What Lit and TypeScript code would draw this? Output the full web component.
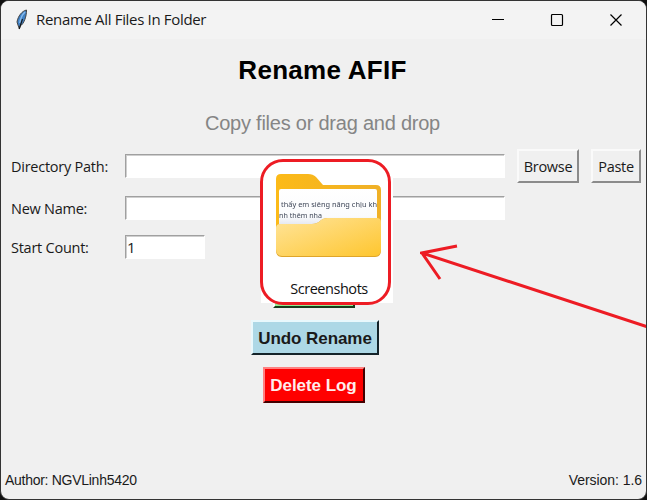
import { LitElement, html, css, svg } from "lit";
import { customElement, property } from "lit/decorators.js";

@customElement("folder-tile")
class FolderTile extends LitElement {
  @property() label = "";

  static styles = css`
    :host { display: block; position: relative; width: 132px; height: 144px; background: #fff; }
    .ring { position: absolute; left: -1px; top: 0; box-sizing: border-box; width: 131px; height: 146px; border: 3px solid #ed1c24; border-radius: 23px; }
    .art { display: block; margin: 0 auto 0 14px; padding-top: 15px; }
    .label { position: relative; width: 136px; margin-top: 21px; text-align: center; font: 14.5px/20px "Open Sans", "Noto Sans", sans-serif; letter-spacing: -0.45px; color: #111; }
    .note { font: 7.5px "Noto Sans", sans-serif; fill: #3f4758; filter: blur(0.5px); }
  `;

  render() {
    return html`
      <svg class="art" width="107" height="84" viewBox="0 0 107 84">
        <defs>
          <linearGradient id="front" x1="0" y1="0" x2="1" y2="1">
            <stop offset="0" stop-color="#ffe49a" />
            <stop offset="1" stop-color="#fec62f" />
          </linearGradient>
          <linearGradient id="back" x1="0" y1="0" x2="1" y2="0">
            <stop offset="0" stop-color="#fcba18" />
            <stop offset="1" stop-color="#efb027" />
          </linearGradient>
          <linearGradient id="sheet" x1="0" y1="0" x2="0" y2="1">
            <stop offset="0" stop-color="#fff" />
            <stop offset="0.65" stop-color="#fafbfd" />
            <stop offset="1" stop-color="#d5dae6" />
          </linearGradient>
        </defs>
        <path d="M1 5Q1 0 6 0H33Q38 0 41 3L48 11H101Q106 11 106 16V60H1Z" fill="url(#back)" />
        <rect x="4" y="15" width="98" height="42" rx="2" fill="url(#sheet)" />
        <text class="note" x="6" y="32.5" textLength="96" lengthAdjust="spacingAndGlyphs">thấy em siêng năng chịu kh</text>
        <text class="note" x="4" y="44" textLength="43" lengthAdjust="spacingAndGlyphs">nh thêm nha</text>
        <path d="M1 54Q1 50 5 50H37Q42 50 45 47Q48 44 53 44H102Q106 44 106 48V76Q106 83 100 83H7Q1 83 1 76Z" fill="#dfa52a" />
        <path d="M1 54Q1 50 5 50H37Q42 50 45 47Q48 44 53 44H102Q106 44 106 48V75Q106 82 100 82H7Q1 82 1 75Z" fill="url(#front)" />
      </svg>
      <div class="label">${this.label}</div>
      <div class="ring"></div>
    `;
  }
}

@customElement("app-root")
class AppRoot extends LitElement {
  static styles = css`
    :host { display: block; width: 647px; height: 500px; background: #111; overflow: hidden; }
    .window { position: relative; box-sizing: border-box; width: 647px; height: 500px; border: 1px solid #333; border-radius: 9px; background: #f0f0f0; overflow: hidden; display: flex; flex-direction: column; font: 14.5px/20px "Open Sans", "Noto Sans", sans-serif; color: #1a1a1a; }
    .titlebar { height: 38px; flex: none; display: flex; align-items: center; background: #f3f3f3; padding-left: 13px; }
    .feather { width: 14px; height: 22px; flex: none; }
    .caption { flex: 1; margin-left: 8px; padding-bottom: 2px; font-size: 15px; letter-spacing: -0.33px; white-space: nowrap; }
    .controls { display: flex; margin-right: 23px; gap: 45px; }
    .controls svg { width: 14px; height: 14px; display: block; }
    h1 { margin: 14px 2px 0 0; text-align: center; font: bold 26px/34px "Liberation Sans", Arial, sans-serif; color: #000; letter-spacing: 0.28px; }
    .hint { margin: 23px 2px 0 0; text-align: center; font: 20px/26px "Liberation Sans", Arial, sans-serif; letter-spacing: -0.23px; color: #858585; }
    .form { margin: 13px 6px 0 10px; display: grid; grid-template-columns: 114px 380px 12px 62px 12px 50px; grid-template-rows: 34px 9px 32px 7px 32px; align-items: center; }
    .form .label { grid-column: 1; white-space: nowrap; letter-spacing: -0.25px; padding-top: 1px; }
    .row2 { grid-row: 3; }
    .row3 { grid-row: 5; }
    .field { grid-column: 2; box-sizing: border-box; height: 24px; background: #fff; border: 1px solid; border-color: #a0a0a0 #fff #fff #a0a0a0; box-shadow: inset 1px 1px #cfcfcf; padding-left: 1px; line-height: 23px; font-size: 15px; }
    .short { width: 80px; }
    .button { box-sizing: border-box; display: flex; align-items: center; justify-content: center; white-space: nowrap; }
    .tool { height: 34px; border: 2px solid; border-color: #fafafa #8b8b8b #8b8b8b #fafafa; letter-spacing: -0.3px; padding-top: 1px; }
    .browse { grid-column: 4; }
    .paste { grid-column: 6; }
    .actions { margin: 9px 0 0 250px; width: 128px; display: flex; flex-direction: column; align-items: center; gap: 12px; }
    .action { height: 36px; border: 2px solid; padding-top: 2px; font: bold 17px/20px "Liberation Sans", Arial, sans-serif; letter-spacing: -0.06px; }
    .rename { width: 82px; background: #90ee90; border-color: #fff #173d1c #173d1c #fff; margin-left: -2px; }
    .undo { width: 128px; height: 35px; background: #add8e6; border-color: #e9f8fc #142329 #142329 #e9f8fc; }
    .delete { width: 102px; background: #f00; color: #ffecec; border-color: #ff8080 #400 #400 #ff8080; margin-left: -3px; }
    .footer { margin-top: auto; display: flex; justify-content: space-between; padding: 0 4px 9px 4px; font: 14px/20px "Liberation Sans", Arial, sans-serif; letter-spacing: -0.28px; }
    .version { letter-spacing: -0.05px; }
    folder-tile { position: absolute; left: 260px; top: 158px; }
    .arrow { position: absolute; left: 419px; top: 240px; }
  `;

  private feather() {
    return svg`
      <path d="M12.5 1C8 2 4 7 3 13L4.3 17L5.4 20L6.2 17C10 15 12.7 7 12.5 1Z" fill="#3f80c4" stroke="#444" stroke-width="1"/>
      <path d="M11 3Q6.8 7 5.8 14" fill="none" stroke="#86b9ea" stroke-width="1.5"/>
      <path d="M8.5 10L5.2 20" fill="none" stroke="#111" stroke-width="1.1"/>`;
  }

  render() {
    return html`
      <div class="window">
        <div class="titlebar">
          <svg class="feather" viewBox="0 0 14 22">${this.feather()}</svg>
          <div class="caption">Rename All Files In Folder</div>
          <div class="controls">
            <svg viewBox="0 0 14 14"><path d="M1 6.5H13" stroke="#000" /></svg>
            <svg viewBox="0 0 14 14"><rect x="1.5" y="1.5" width="11" height="11" rx="1" fill="none" stroke="#000" stroke-width="1.2" /></svg>
            <svg viewBox="0 0 14 14"><path d="M1.5 1.5L12.5 12.5M12.5 1.5L1.5 12.5" stroke="#000" stroke-width="1.2" /></svg>
          </div>
        </div>
        <h1>Rename AFIF</h1>
        <div class="hint">Copy files or drag and drop</div>
        <div class="form">
          <div class="label">Directory Path:</div>
          <div class="field"></div>
          <div class="button tool browse">Browse</div>
          <div class="button tool paste">Paste</div>
          <div class="label row2">New Name:</div>
          <div class="field row2"></div>
          <div class="label row3">Start Count:</div>
          <div class="field short row3">1</div>
        </div>
        <div class="actions">
          <div class="button action rename"></div>
          <div class="button action undo">Undo Rename</div>
          <div class="button action delete">Delete Log</div>
        </div>
        <div class="footer"><span>Author: NGVLinh5420</span><span class="version">Version: 1.6</span></div>
        <folder-tile label="Screenshots"></folder-tile>
        <svg class="arrow" width="228" height="90" viewBox="0 0 228 90">
          <path d="M228 86L2 12L37 5M2 12L20 38" fill="none" stroke="#ed1c24" stroke-width="3" />
        </svg>
      </div>
    `;
  }
}
